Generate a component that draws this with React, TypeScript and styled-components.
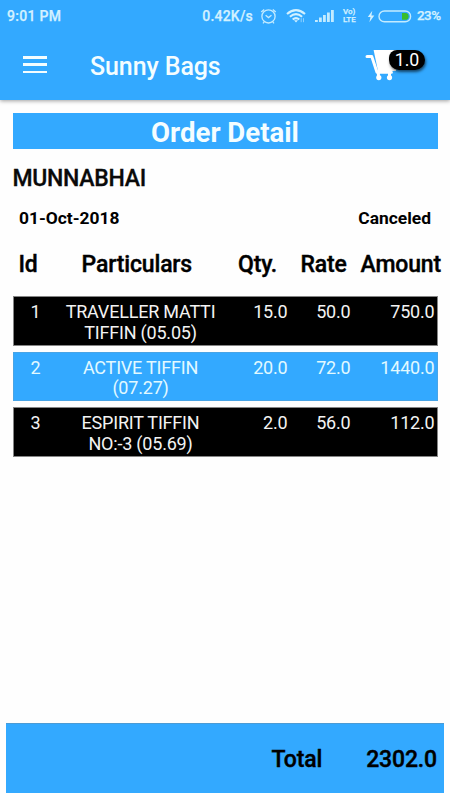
import React from "react";
import styled, { createGlobalStyle } from "styled-components";

const BLUE = "#33a9ff";

const GlobalStyle = createGlobalStyle`
  * { box-sizing: border-box; }
  html, body { margin: 0; padding: 0; background: #fff; }
  body { font-family: Roboto, "Liberation Sans", sans-serif; color: #0a0a0a; }
`;

const Screen = styled.main`
  width: 450px;
  height: 800px;
  display: flex;
  flex-direction: column;
  overflow: hidden;
  background: #fefefe;
`;

const Header = styled.header`
  height: 100px;
  flex: none;
  background: ${BLUE};
  box-shadow: 0 1px 4px rgba(0, 0, 0, 0.38);
`;

const StatusBar = styled.div`
  height: 32px;
  padding: 0 8px 0 7px;
  display: flex;
  align-items: center;
  color: #d3f1ff;
  font-size: 14px;
  font-weight: 500;
  line-height: 32px;
  -webkit-text-stroke: 0.25px currentColor;
`;

const Clock = styled.span`
  flex: 1;
  letter-spacing: 0.3px;
`;

const Speed = styled.span`
  letter-spacing: 0.2px;
`;

const StatusIcon = styled.svg<{ $gap: number }>`
  display: block;
  flex: none;
  margin-left: ${(p) => p.$gap}px;
`;

const NetworkType = styled.span`
  width: 15px;
  margin-left: 9px;
  display: flex;
  flex-direction: column;
  font-size: 8px;
  font-weight: 500;
  line-height: 8px;
`;

const Percent = styled.span`
  width: 25px;
  margin-left: 5px;
  font-size: 13.4px;
  letter-spacing: -0.5px;
`;

const Toolbar = styled.div`
  height: 68px;
  padding: 0 24px 0 23px;
  display: flex;
  align-items: center;
`;

const MenuButton = styled.button`
  width: 24px;
  height: 17px;
  margin-top: -3px;
  padding: 0;
  border: 0;
  background: none;
  display: flex;
  flex-direction: column;
  justify-content: space-between;
`;

const MenuLine = styled.span`
  height: 2.5px;
  background: #f4fdff;
`;

const AppTitle = styled.h1`
  margin: 1px 0 0 43px;
  flex: 1;
  color: #f4fdff;
  font-size: 25px;
  font-weight: 500;
  line-height: 32px;
  letter-spacing: -0.1px;
`;

const Cart = styled.div`
  position: relative;
  width: 61px;
  height: 34px;
  margin-top: 2px;
`;

const CartBadge = styled.span`
  position: absolute;
  left: 24px;
  top: 0;
  width: 36px;
  height: 20px;
  border-radius: 8px 10px 10px 10px;
  background: #000;
  box-shadow: 1px 2px 3px rgba(0, 0, 0, 0.6);
  color: #fff;
  font-size: 17.8px;
  line-height: 20px;
  text-align: center;
`;

const Content = styled.section`
  flex: 1;
  padding: 12.5px 12.5px 0;
  display: flex;
  flex-direction: column;
`;

const Banner = styled.h2`
  margin: 0;
  height: 36.5px;
  background: ${BLUE};
  color: #f4fdff;
  font-size: 27.6px;
  font-weight: 700;
  line-height: 40px;
  text-align: center;
`;

const Customer = styled.h3`
  margin: 15px 0 0;
  font-size: 23px;
  font-weight: 500;
  line-height: 30px;
  letter-spacing: -0.3px;
  -webkit-text-stroke: 0.3px currentColor;
`;

const Meta = styled.div`
  height: 24px;
  margin-top: 12px;
  padding: 0 6.5px;
  display: flex;
  justify-content: space-between;
  color: #000;
  font-size: 17.4px;
  font-weight: 700;
  line-height: 24px;
`;

const columns = "44px 166px 64px 63px 1fr";

const HeadRow = styled.div`
  height: 66px;
  padding-top: 20px;
  display: flex;
  color: #000;
  font-size: 23px;
  font-weight: 500;
  line-height: 30px;
  letter-spacing: -0.15px;
  -webkit-text-stroke: 0.4px currentColor;
`;

const HeadCell = styled.span<{ $width: number; $indent?: number }>`
  flex: none;
  width: ${(p) => p.$width}px;
  padding-left: ${(p) => p.$indent ?? 0}px;
  white-space: nowrap;
`;

const Rows = styled.div`
  display: flex;
  flex-direction: column;
  gap: 6px;
`;

const ItemRow = styled.div<{ $accent: boolean }>`
  height: 49.7px;
  padding: 5px 2px 0 0;
  display: grid;
  grid-template-columns: ${columns};
  border: 1px solid ${(p) => (p.$accent ? "#48a4e6" : "#858585")};
  background: ${(p) => (p.$accent ? BLUE : "#000")};
  color: ${(p) => (p.$accent ? "#e2f9ff" : "#f3f3f3")};
  font-size: 18px;
  line-height: 20.5px;
  letter-spacing: -0.2px;
`;

const Cell = styled.span<{ $align: "left" | "center" | "right"; $start?: number }>`
  padding-left: ${(p) => p.$start ?? 0}px;
  text-align: ${(p) => p.$align};
  white-space: pre-line;
`;

const Footer = styled.footer`
  height: 70.5px;
  margin: 0 6.5px 7px 6px;
  padding: 2px 6.5px 0 0;
  flex: none;
  display: flex;
  align-items: center;
  justify-content: flex-end;
  gap: 44px;
  background: ${BLUE};
  border-top: 1px solid #4b9bd5;
  color: #000;
  font-size: 23px;
  font-weight: 500;
  letter-spacing: -0.15px;
  -webkit-text-stroke: 0.4px currentColor;
`;

const items = [
  { id: 1, name: "TRAVELLER MATTI\nTIFFIN (05.05)", qty: "15.0", rate: "50.0", amount: "750.0" },
  { id: 2, name: "ACTIVE TIFFIN\n(07.27)", qty: "20.0", rate: "72.0", amount: "1440.0" },
  { id: 3, name: "ESPIRIT TIFFIN\nNO:-3 (05.69)", qty: "2.0", rate: "56.0", amount: "112.0" },
];

const AlarmIcon = () => (
  <StatusIcon $gap={7} width="17" height="17" viewBox="0 0 17 17" fill="none" stroke="#c3ebff" strokeWidth="1.3">
    <circle cx="8.5" cy="8.4" r="6.6" />
    <path d="M1.2 4 4.2 1.4M15.8 4 12.8 1.4M5.6 7.2 8.5 9.6 11.5 7.2M4.2 13.8 3 15.3M12.8 13.8 14 15.3" />
  </StatusIcon>
);

const WifiIcon = () => (
  <StatusIcon $gap={9} width="21" height="16" viewBox="0 0 21 16" fill="none" stroke="#d3f1ff" strokeWidth="2.1">
    <path d="M1 6Q10 -1.8 19 6M3.9 8.8Q10 3.6 16.1 8.8M6.7 11.5Q10 8.7 13.3 11.5" />
    <path d="M8 12.2h4L10 14.6Z" fill="#d3f1ff" stroke="none" />
    <path d="M15.2 10.2v4M17.5 10.2v4" stroke="#8bd0ff" strokeWidth="1" />
  </StatusIcon>
);

const SignalIcon = () => (
  <StatusIcon $gap={8} width="19" height="14" viewBox="0 0 19 14" fill="#c3ebff">
    <path d="M0 11h2.8v2H0zM4 8.5h2.8V13H4zM8 6h2.8v7H8zM12 3.5h2.8V13H12zM16 1h2.8v12H16z" />
  </StatusIcon>
);

const BatteryIcon = () => (
  <>
    <StatusIcon $gap={9} width="8" height="13" viewBox="0 0 8 13" fill="#d3f1ff">
      <path d="M5.3.7.8 7h2.7L2.4 12.3 7.3 5.5H4.4Z" />
    </StatusIcon>
    <StatusIcon $gap={3} width="34" height="13" viewBox="0 0 34 13">
      <rect x="1" y="1" width="31.6" height="10.8" rx="5.4" fill="none" stroke="#c3ebff" strokeWidth="1.4" />
      <path d="M24 3h3.2a3.4 3.4 0 0 1 0 6.8H24z" fill="#39bd2c" />
    </StatusIcon>
  </>
);

const CartIcon = () => (
  <svg width="36" height="34" viewBox="0 0 36 34" fill="#fff">
    <path d="M2 6.6h4.8L12 22.2H26.4" fill="none" stroke="#fff" strokeWidth="3" strokeLinecap="round" strokeLinejoin="round" />
    <path d="M8.6 0H34L31 21H13Z" />
    <path d="M13.4 22v5M24.5 22v5" stroke="#fff" strokeWidth="3" />
    <circle cx="13.8" cy="27.6" r="2.6" />
    <circle cx="24.5" cy="27.6" r="2.6" />
  </svg>
);

export default function App() {
  return (
    <>
      <GlobalStyle />
      <Screen>
        <Header>
          <StatusBar>
            <Clock>9:01 PM</Clock>
            <Speed>0.42K/s</Speed>
            <AlarmIcon />
            <WifiIcon />
            <SignalIcon />
            <NetworkType>
              <span>Vo)</span>
              <span>LTE</span>
            </NetworkType>
            <BatteryIcon />
            <Percent>23%</Percent>
          </StatusBar>
          <Toolbar>
            <MenuButton aria-label="Menu">
              <MenuLine />
              <MenuLine />
              <MenuLine />
            </MenuButton>
            <AppTitle>Sunny Bags</AppTitle>
            <Cart>
              <CartIcon />
              <CartBadge>1.0</CartBadge>
            </Cart>
          </Toolbar>
        </Header>
        <Content>
          <Banner>Order Detail</Banner>
          <Customer>MUNNABHAI</Customer>
          <Meta>
            <span>01-Oct-2018</span>
            <span>Canceled</span>
          </Meta>
          <HeadRow>
            <HeadCell $width={69} $indent={6}>Id</HeadCell>
            <HeadCell $width={156.5}>Particulars</HeadCell>
            <HeadCell $width={62.5}>Qty.</HeadCell>
            <HeadCell $width={60}>Rate</HeadCell>
            <HeadCell $width={80}>Amount</HeadCell>
          </HeadRow>
          <Rows>
            {items.map((item) => (
              <ItemRow key={item.id} $accent={item.id % 2 === 0}>
                <Cell $align="left" $start={17}>{item.id}</Cell>
                <Cell $align="center">{item.name}</Cell>
                <Cell $align="right">{item.qty}</Cell>
                <Cell $align="right">{item.rate}</Cell>
                <Cell $align="right">{item.amount}</Cell>
              </ItemRow>
            ))}
          </Rows>
        </Content>
        <Footer>
          <span>Total</span>
          <span>2302.0</span>
        </Footer>
      </Screen>
    </>
  );
}
